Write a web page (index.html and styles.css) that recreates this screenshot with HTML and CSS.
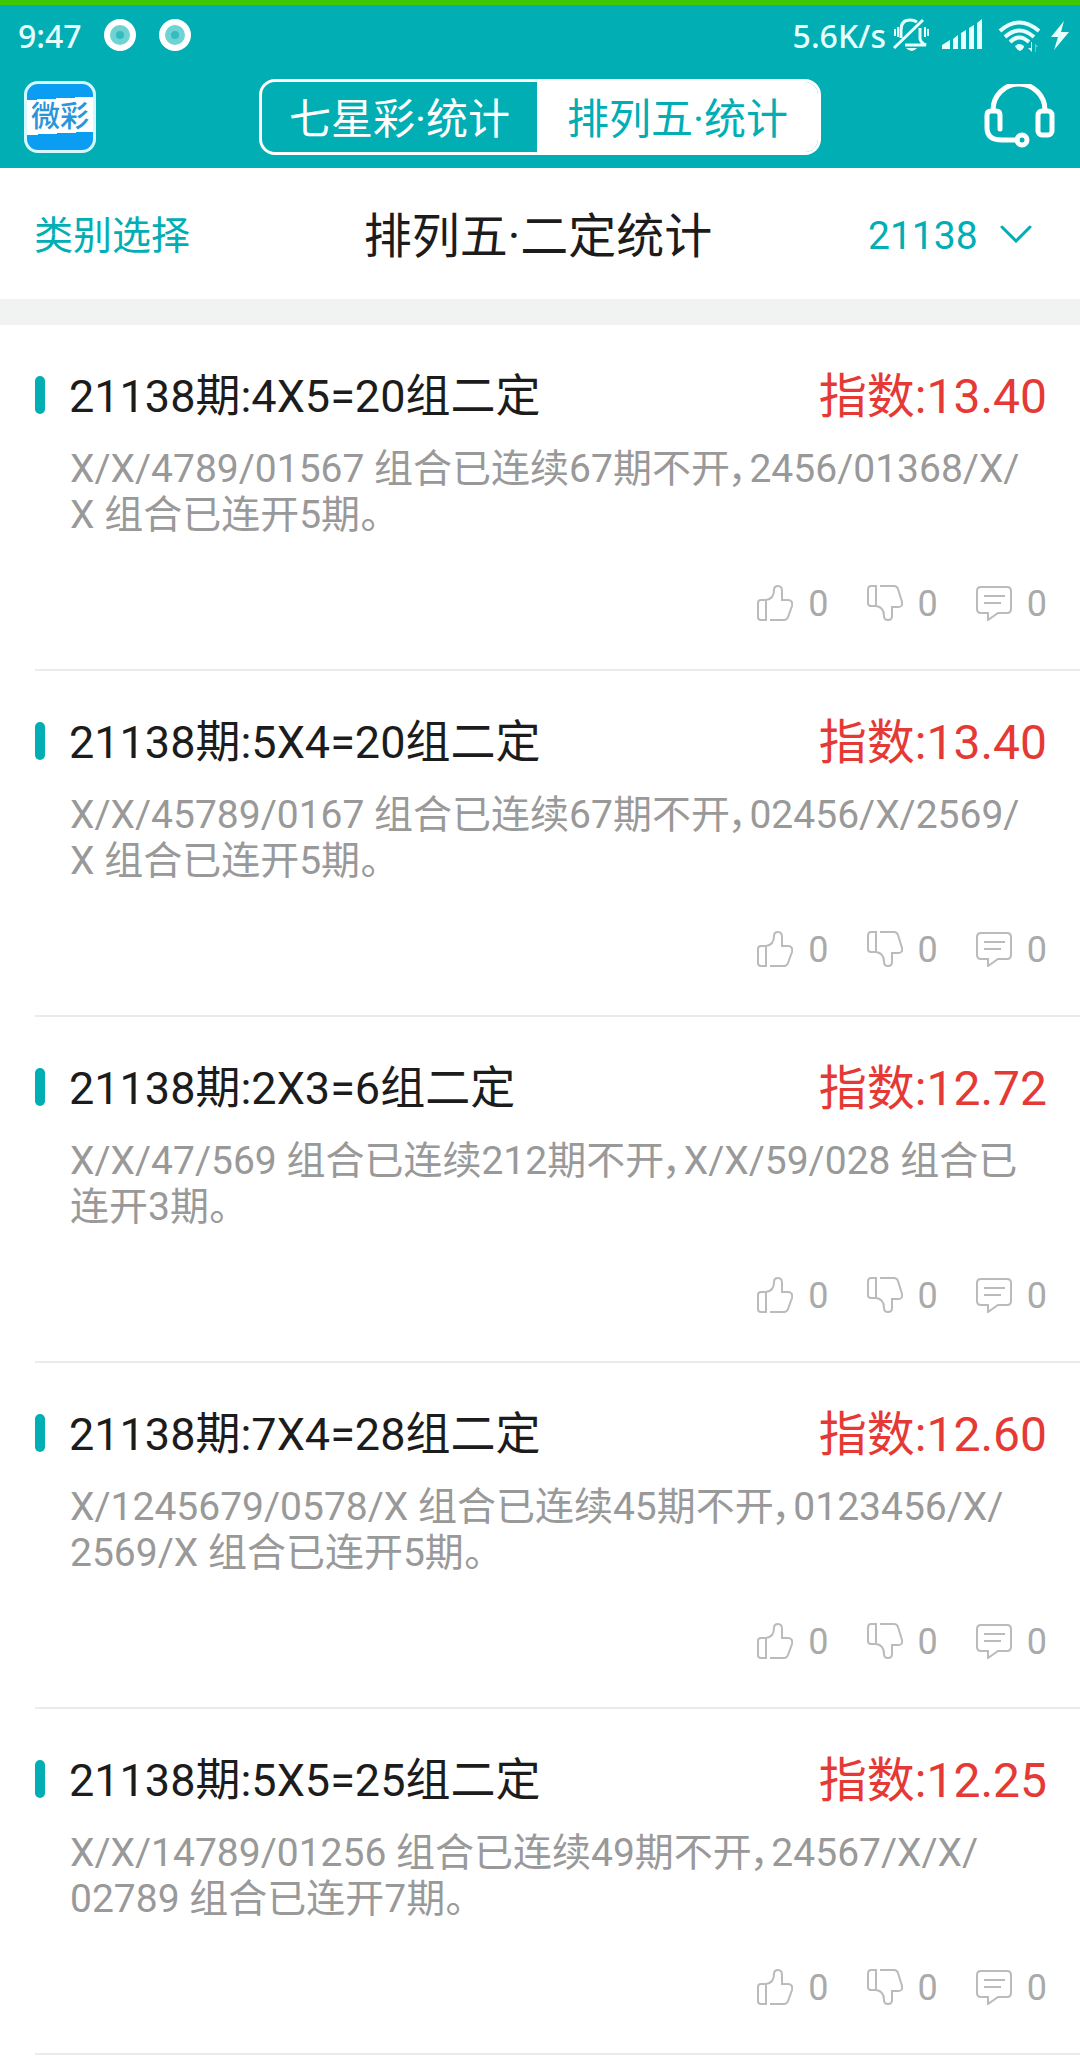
FILE: index.html
```html
<!DOCTYPE html>
<html lang="zh-CN">
<head>
  <meta charset="UTF-8" />
  <meta name="viewport" content="width=device-width, initial-scale=1" />
  <title>排列五·二定统计</title>
  <link rel="stylesheet" href="styles.css">
</head>
<body>
  <!-- shared icons -->
  <svg class="sprite" aria-hidden="true">
    <symbol id="icon-up" viewBox="0 0 36 36">
      <path d="M9 15H4q-3 0-3 3v14q0 3 3 3h5zM13 35h14q3 0 4-3l4-11q1-6-4-6h-6V6q0-5-4-5t-4 4q0 9-8 10" />
    </symbol>
    <symbol id="icon-down" viewBox="0 0 36 36">
      <path d="M9 1H4Q1 1 1 5v13q0 3 3 3h5zM13 1h14q3 0 4 3l4 13q1 5-4 5h-6v9q0 4-4 4t-4-4q0-9-8-10" />
    </symbol>
    <symbol id="icon-comment" viewBox="0 0 36 36">
      <path d="M5 2h26q4 0 4 4v18q0 4-4 4h-9l-10 7v-7H5q-4 0-4-4V6q0-4 4-4zM8 11h21M8 18h17" />
    </symbol>
  </svg>

  <header class="top">
    <div class="status">
      <span>9:47</span>
      <svg class="ring" viewBox="0 0 33 33"><circle cx="16" cy="16" r="13" /><circle class="dot" cx="16" cy="16" r="4" /></svg>
      <svg class="ring" viewBox="0 0 33 33"><circle cx="16" cy="16" r="13" /><circle class="dot" cx="16" cy="16" r="4" /></svg>
      <span class="speed">5.6K/s</span>
      <svg class="status-icons" viewBox="0 0 180 40">
        <!-- silent -->
        <g class="line">
          <path d="M9 22V14Q9 4 18 4q4 0 7 2M28 12v11q1 4 6 6H13M2 32L31 4" />
          <path class="thin" d="M3 13v7M6 11v10M33 11v10M36 13v7" />
        </g>
        <path class="solid" d="M14 32h11q-5 6-11 0z" />
        <!-- signal -->
        <path class="solid" d="M50 33v-4l8-5v9zM61 33V23l5-4v14zM69 33V17l5-3v19zM77 33V12l5-3v24zM85 33V7l5-4v30z" />
        <!-- wifi -->
        <g class="line wide">
          <path d="M108 15q19-17 39 0M113 21q14-13 29 0M118 26q9-9 19 0" />
        </g>
        <path class="solid" d="M123 30q4-4 9 0 0 3-4 5-4-2-5-5zM140 26v10l-4-4h3v-6z" />
        <path class="solid faint" d="M143 36V27l3 4h-2v5z" />
        <!-- charging -->
        <path class="solid" d="M172 5l-13 16h7l-4 13 15-18h-8z" />
      </svg>
    </div>
    <div class="nav">
      <a href="#" class="logo"><span>微彩</span></a>
      <div class="tabs">
        <button type="button" class="tab">七星彩·统计</button>
        <button type="button" class="tab active">排列五·统计</button>
      </div>
      <button type="button" class="service" aria-label="客服">
        <svg viewBox="0 0 72 66">
          <path d="M9 26a26 26 0 0 1 52 0M16 45V31q0-4-4-4H7q-4 0-4 4v13q0 12 15 12h15" />
          <rect x="54" y="27" width="14" height="24" rx="4" />
          <circle cx="38" cy="56" r="5" />
        </svg>
      </button>
    </div>
  </header>

  <div class="filter">
    <a href="#" class="category">类别选择</a>
    <h1>排列五·二定统计</h1>
    <label class="issue">
      <select aria-label="期号">
        <option>21138</option>
      </select>
      <svg viewBox="0 0 32 18"><path d="M2 2l14 14L30 2" /></svg>
    </label>
  </div>

  <main class="list">
    <article class="item">
      <div class="item-head">
        <h2>21138期:4X5=20组二定</h2>
        <span class="index">指数:13.40</span>
      </div>
      <p>X/X/4789/01567 组合已连续67期不开，2456/01368/X/<wbr>X 组合已连开5期。</p>
      <div class="actions">
        <button type="button" aria-label="赞"><svg><use href="#icon-up" /></svg>0</button>
        <button type="button" aria-label="踩"><svg><use href="#icon-down" /></svg>0</button>
        <button type="button" aria-label="评论"><svg><use href="#icon-comment" /></svg>0</button>
      </div>
    </article>

    <article class="item">
      <div class="item-head">
        <h2>21138期:5X4=20组二定</h2>
        <span class="index">指数:13.40</span>
      </div>
      <p>X/X/45789/0167 组合已连续67期不开，02456/X/2569/<wbr>X 组合已连开5期。</p>
      <div class="actions">
        <button type="button" aria-label="赞"><svg><use href="#icon-up" /></svg>0</button>
        <button type="button" aria-label="踩"><svg><use href="#icon-down" /></svg>0</button>
        <button type="button" aria-label="评论"><svg><use href="#icon-comment" /></svg>0</button>
      </div>
    </article>

    <article class="item">
      <div class="item-head">
        <h2>21138期:2X3=6组二定</h2>
        <span class="index">指数:12.72</span>
      </div>
      <p>X/X/47/569 组合已连续212期不开，X/X/59/028 组合已连开3期。</p>
      <div class="actions">
        <button type="button" aria-label="赞"><svg><use href="#icon-up" /></svg>0</button>
        <button type="button" aria-label="踩"><svg><use href="#icon-down" /></svg>0</button>
        <button type="button" aria-label="评论"><svg><use href="#icon-comment" /></svg>0</button>
      </div>
    </article>

    <article class="item">
      <div class="item-head">
        <h2>21138期:7X4=28组二定</h2>
        <span class="index">指数:12.60</span>
      </div>
      <p>X/1245679/0578/X 组合已连续45期不开，0123456/X/<wbr>2569/X 组合已连开5期。</p>
      <div class="actions">
        <button type="button" aria-label="赞"><svg><use href="#icon-up" /></svg>0</button>
        <button type="button" aria-label="踩"><svg><use href="#icon-down" /></svg>0</button>
        <button type="button" aria-label="评论"><svg><use href="#icon-comment" /></svg>0</button>
      </div>
    </article>

    <article class="item">
      <div class="item-head">
        <h2>21138期:5X5=25组二定</h2>
        <span class="index">指数:12.25</span>
      </div>
      <p>X/X/14789/01256 组合已连续49期不开，24567/X/X/<wbr>02789 组合已连开7期。</p>
      <div class="actions">
        <button type="button" aria-label="赞"><svg><use href="#icon-up" /></svg>0</button>
        <button type="button" aria-label="踩"><svg><use href="#icon-down" /></svg>0</button>
        <button type="button" aria-label="评论"><svg><use href="#icon-comment" /></svg>0</button>
      </div>
    </article>
  </main>
</body>
</html>
```

FILE: styles.css
```css
* {
  box-sizing: border-box;
}

body {
  margin: 0;
  font-family: Roboto, "Noto Sans CJK SC", sans-serif;
  background-color: #fff;
  color: #1c1c1c;
}

h1, h2, p {
  margin: 0;
  font-weight: 400;
}

a {
  text-decoration: none;
}

button, select {
  margin: 0;
  padding: 0;
  border: 0;
  background: none;
  font: inherit;
  color: inherit;
}

svg {
  display: block;
  flex: none;
}

.sprite {
  display: none;
}

/* header */
.top {
  border-top: 5px solid #3cc800;
  background-color: #00aeb4;
  color: #fff;
}

.status {
  display: flex;
  align-items: center;
  height: 61px;
  padding: 0 8px 0 18px;
  font-family: "Noto Sans", sans-serif;
  font-size: 32px;
  font-weight: 500;
  color: #e6ffff;
}

.ring {
  width: 33px;
  height: 33px;
  margin-left: 22px;
  fill: #6fd3d3;
  stroke: #fff;
  stroke-width: 6;
}

.ring .dot {
  fill: #35bcbf;
  stroke: none;
}

.speed {
  margin-left: auto;
}

.status-icons {
  width: 180px;
  height: 40px;
  margin-left: 6px;
}

.line {
  fill: none;
  stroke: #e6ffff;
  stroke-width: 3;
}

.line .thin {
  stroke-width: 2;
}

.line.wide {
  stroke-width: 4;
}

.solid {
  fill: #e6ffff;
}

.faint {
  opacity: 0.4;
}

.nav {
  display: grid;
  grid-template-columns: 1fr auto 1fr;
  align-items: center;
  height: 102px;
  padding: 0 24px;
}

.logo {
  display: flex;
  align-items: center;
  justify-content: center;
  width: 72px;
  height: 72px;
  border: 3px solid #d5f8ff;
  border-radius: 14px;
  background: linear-gradient(177deg, #0a9df2 0 16px, #fff 16px 51px, #0a9df2 51px);
  color: #2a95d8;
  font-size: 29px;
  font-weight: 500;
  line-height: 36px;
}

.tabs {
  display: flex;
  height: 76px;
  border: 3px solid #fff;
  border-radius: 16px;
  overflow: hidden;
}

.tab {
  padding: 0 27px 4px;
  font-size: 42px;
}

.tab.active {
  padding: 0 30px 4px;
  background-color: #fff;
  color: #00aeb4;
}

.service {
  justify-self: end;
}

.service svg {
  width: 72px;
  height: 66px;
  fill: none;
  stroke: #fff;
  stroke-width: 5;
  stroke-linecap: round;
}

/* category / issue bar */
.filter {
  display: grid;
  grid-template-columns: 1fr auto 1fr;
  align-items: center;
  height: 157px;
  padding: 0 38px 4px 34px;
  border-bottom: 26px solid #f1f3f2;
  font-size: 39px;
  color: #00aeb4;
}

.category {
  color: inherit;
}

.filter h1 {
  font-size: 48px;
  color: #1c1c1c;
}

.issue {
  display: flex;
  align-items: center;
  justify-self: end;
  gap: 22px;
  padding: 4px 10px 0 0;
}

.issue select {
  appearance: none;
  padding-top: 4px;
}

.issue svg {
  width: 32px;
  height: 18px;
  fill: none;
  stroke: #00aeb4;
  stroke-width: 3;
  stroke-linecap: round;
}

/* list */
.item {
  margin-left: 35px;
  padding: 44px 33px 43px 0;
  border-bottom: 2px solid #ebebeb;
}

.item-head {
  display: flex;
  align-items: center;
  justify-content: space-between;
  line-height: 56px;
}

.item-head h2 {
  display: flex;
  align-items: center;
  gap: 24px;
  font-size: 45px;
}

.item-head h2::before {
  content: "";
  width: 10px;
  height: 38px;
  margin-bottom: 4px;
  border-radius: 5px;
  background-color: #00aeb4;
}

.index {
  font-size: 48px;
  color: #e53935;
}

.item p {
  margin: 21px 16px 44px 35px;
  font-size: 39px;
  line-height: 46px;
  font-feature-settings: "palt";
  color: #999;
}

.actions {
  display: flex;
  justify-content: flex-end;
  gap: 38px;
}

.actions button {
  display: flex;
  align-items: center;
  gap: 15px;
  font-size: 36px;
  line-height: 44px;
  color: #aaa;
}

.actions svg {
  width: 36px;
  height: 36px;
  margin-bottom: 3px;
  fill: none;
  stroke: #bbb;
  stroke-width: 2;
}
```
